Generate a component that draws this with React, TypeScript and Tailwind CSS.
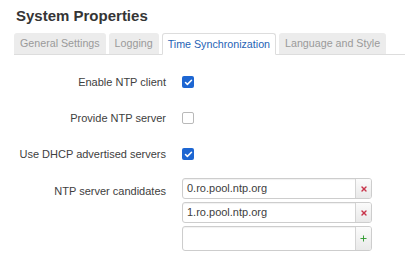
import { Check, Plus, X } from "lucide-react";

const tabs = ["General Settings", "Logging", "Time Synchronization", "Language and Style"];

function Checkbox({ checked }: { checked: boolean }) {
  if (checked) {
    return (
      <span className="w-[12px] h-[12px] rounded-[2px] bg-[#1d66d2] flex items-center justify-center">
        <Check className="w-[9px] h-[9px] text-white" strokeWidth={4} />
      </span>
    );
  }
  return <span className="w-[12px] h-[12px] rounded-[2px] bg-white border border-[#b9b9b9]" />;
}

function Row({ label, checked }: { label: string; checked: boolean }) {
  return (
    <div className="flex items-center h-[36px]">
      <div className="w-[166px] text-right text-[11px] text-[#404040]">{label}</div>
      <div className="ml-[16px] flex">
        <Checkbox checked={checked} />
      </div>
    </div>
  );
}

function ServerInput({ value, add }: { value: string; add?: boolean }) {
  return (
    <div
      className={
        "flex w-[190px] border border-[#cdcdcd] rounded-[3px] overflow-hidden shadow-[inset_0_1px_1px_rgba(0,0,0,0.06)] " +
        (add ? "h-[25px]" : "h-[21px]")
      }
    >
      <div className="flex-1 pl-[4px] flex items-center text-[11px] text-[#404040]">{value}</div>
      <div className="w-[16px] border-l border-[#d4d4d4] bg-gradient-to-b from-[#fbfbfb] to-[#e9e9e9] flex items-center justify-center">
        {add ? (
          <Plus className="w-[9px] h-[9px] text-[#2f9a2f]" strokeWidth={2.5} />
        ) : (
          <X className="w-[8px] h-[8px] text-[#c8344a]" strokeWidth={4} />
        )}
      </div>
    </div>
  );
}

export default function App() {
  return (
    <div className="w-[405px] h-[263px] bg-white overflow-hidden px-[14px] font-['Liberation_Sans',Arial,sans-serif]">
      <h2 className="pt-[6px] pl-[2px] text-[15px] leading-[20px] font-bold text-[#353535]">System Properties</h2>
      <div className="mt-[7px] flex gap-[3px] border-b border-[#dddddd] w-[391px]">
        {tabs.map((t, i) =>
          i === 2 ? (
            <div
              key={t}
              className="shrink-0 whitespace-nowrap -mb-px px-[5px] h-[22px] leading-[20px] text-[10.7px] text-[#1f63b5] bg-white border border-[#dddddd] border-b-white rounded-t-[3px]"
            >
              {t}
            </div>
          ) : (
            <div
              key={t}
              className="shrink-0 whitespace-nowrap px-[6px] h-[21px] leading-[21px] text-[10.7px] text-[#9a9a9a] bg-[#ececec] rounded-t-[3px]"
            >
              {t}
            </div>
          )
        )}
      </div>
      <div className="-ml-[14px] mt-[9px]">
        <Row label="Enable NTP client" checked />
        <Row label="Provide NTP server" checked={false} />
        <Row label="Use DHCP advertised servers" checked />
        <div className="flex mt-[6px]">
          <div className="w-[166px] text-right text-[11px] text-[#404040] pt-[5px]">NTP server candidates</div>
          <div className="ml-[16px] flex flex-col gap-[3px]">
            <ServerInput value="0.ro.pool.ntp.org" />
            <ServerInput value="1.ro.pool.ntp.org" />
            <ServerInput value="" add />
          </div>
        </div>
      </div>
    </div>
  );
}
